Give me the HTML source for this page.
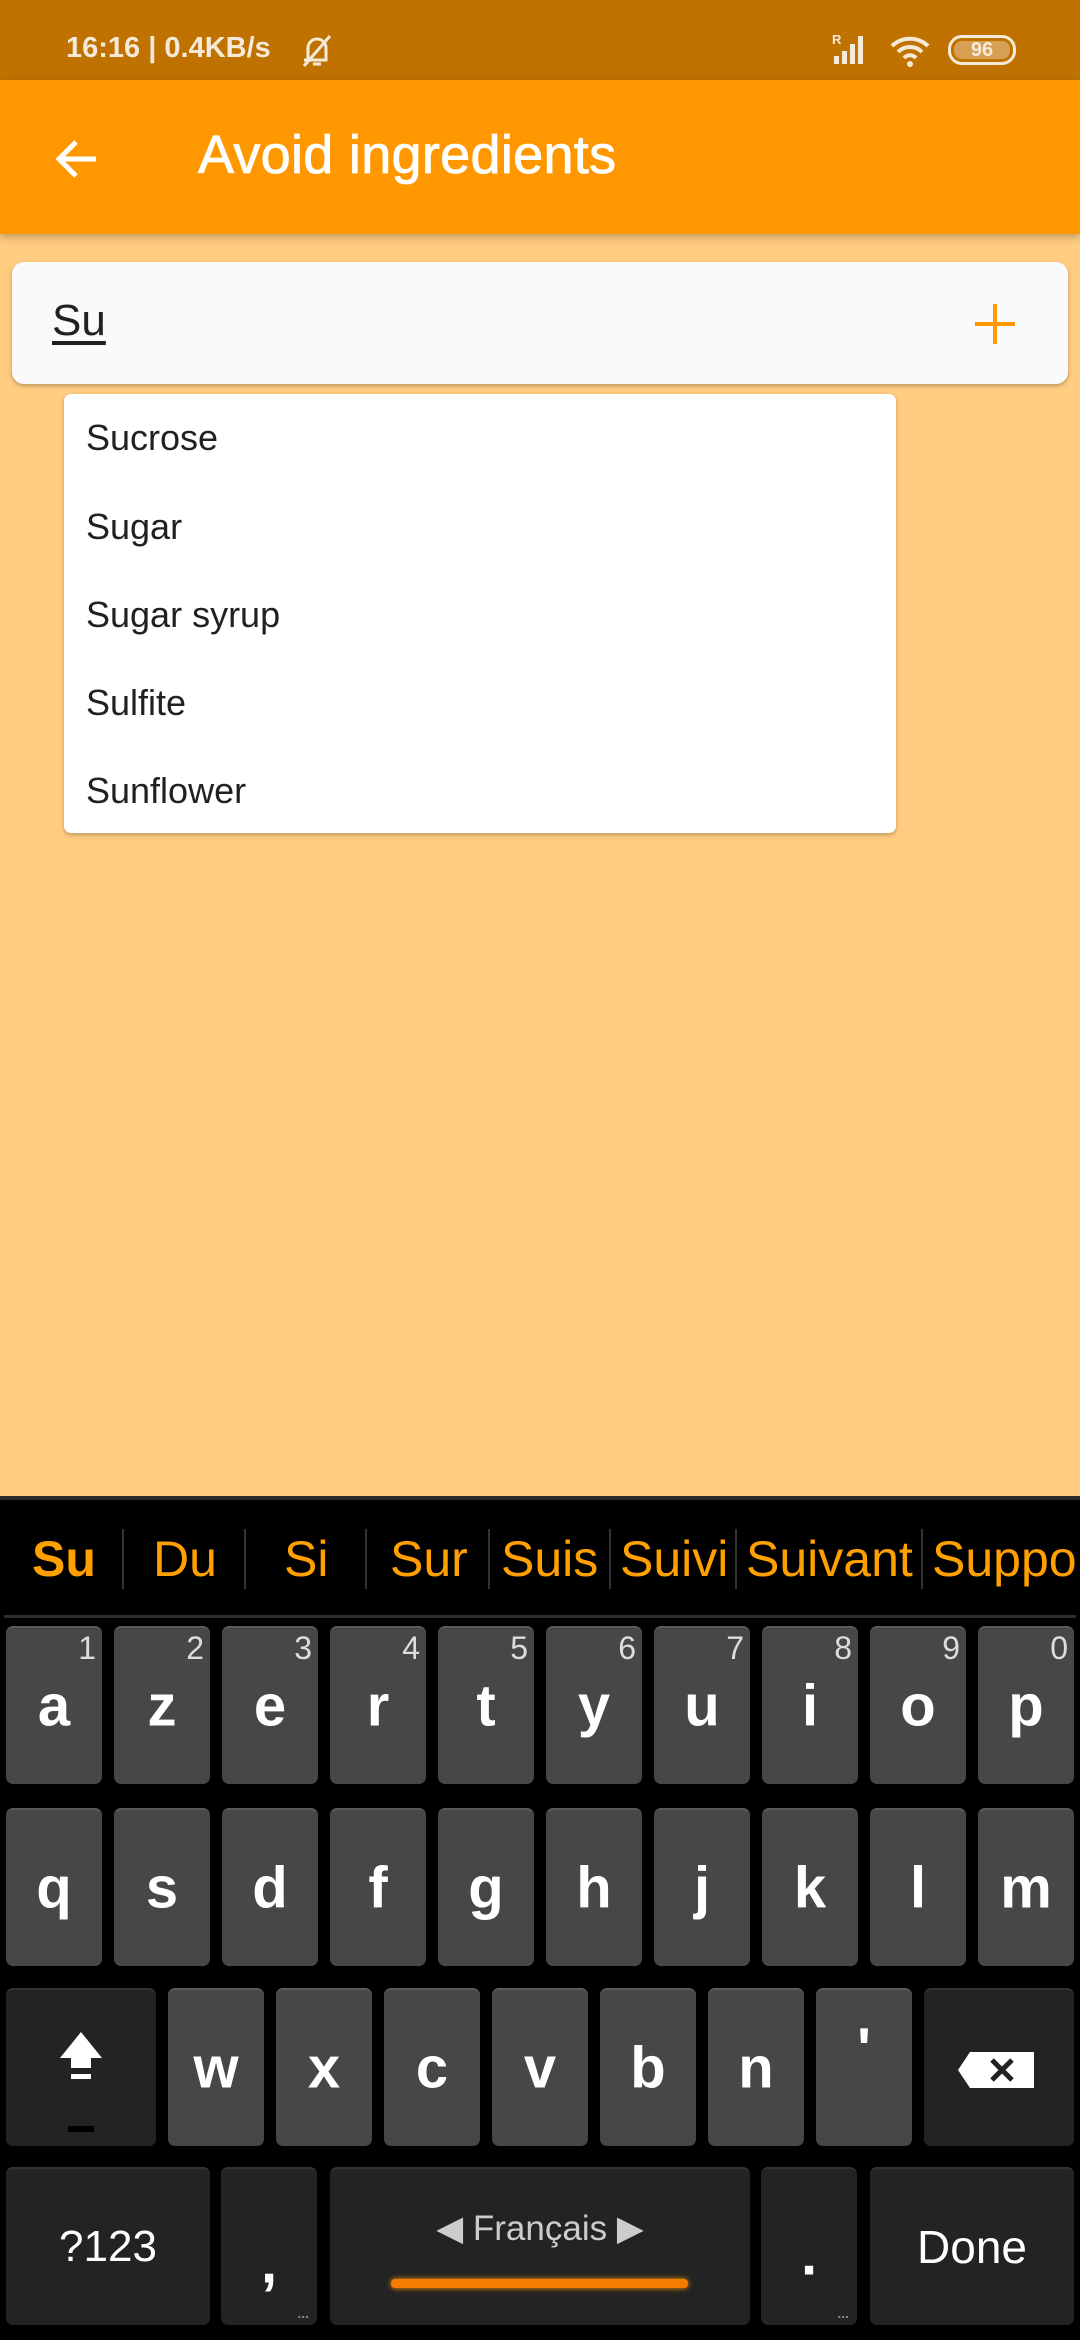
<!DOCTYPE html>
<html><head><meta charset="utf-8"><style>
*{margin:0;padding:0;box-sizing:border-box}
body{width:1080px;height:2340px;background:#ffcc80;font-family:"Liberation Sans",sans-serif;position:relative;overflow:hidden}
.abs{position:absolute}
.status{left:0;top:0;width:1080px;height:80px;background:#bf7200}
.appbar{left:0;top:80px;width:1080px;height:154px;background:#ff9800;box-shadow:0 3px 8px rgba(0,0,0,.25)}
.card{left:12px;top:262px;width:1056px;height:122px;background:#fafafa;border-radius:12px;box-shadow:0 2px 4px rgba(0,0,0,.25)}
.drop{left:64px;top:394px;width:832px;height:439px;background:#fff;border-radius:7px;box-shadow:0 2px 4px rgba(0,0,0,.25)}
.item{position:absolute;left:22px;font-size:36px;color:#212121;transform:translateY(-50%)}
.kb{left:0;top:1496px;width:1080px;height:844px;background:#000;border-top:4px solid #2a2a2a}
.sug{position:absolute;top:1559px;transform:translateY(-50%);font-size:50px;color:#ffa000;white-space:nowrap}
.sep{position:absolute;top:1529px;width:2px;height:60px;background:#333}
.key{position:absolute;width:96px;height:158px;background:#474747;border-radius:7px;border-top:2px solid #5a5a5a;color:#fff;font-weight:bold;font-size:58px;text-align:center}
.dk{background:#232323;border-top:2px solid #333}
.num{position:absolute;right:6px;top:2px;font-size:32px;font-weight:normal;color:#ddd}
.lt{position:absolute;left:0;right:0;top:50%;transform:translateY(-50%)}
</style></head><body>
<div class="abs status"></div>
<div class="abs" style="left:66px;top:32px;font-size:29px;font-weight:bold;color:#f5ead8">16:16 | 0.4KB/s</div>
<svg class="abs" style="left:298px;top:32px" width="38" height="38" viewBox="0 0 38 38"><path d="M10 28 V16 a9 9 0 0 1 18 0 V28 H6 M15 32 h8 M6 34 L32 4" stroke="#f5ead8" stroke-width="3" fill="none"/></svg>
<svg class="abs" style="left:832px;top:32px" width="46" height="34"><text x="0" y="12" font-size="13" fill="#f5ead8" font-family="Liberation Sans" font-weight="bold">R</text><rect x="2" y="24" width="5" height="8" fill="#f5ead8"/><rect x="10" y="19" width="5" height="13" fill="#f5ead8"/><rect x="18" y="12" width="5" height="20" fill="#f5ead8"/><rect x="26" y="4" width="5" height="28" fill="#f5ead8"/></svg>
<svg class="abs" style="left:888px;top:32px" width="48" height="38" viewBox="0 0 48 38"><path d="M4 14 a26 26 0 0 1 36 0 M10 20 a17 17 0 0 1 24 0 M16 26 a8 8 0 0 1 12 0" stroke="#f5ead8" stroke-width="4" fill="none"/><circle cx="22" cy="32" r="3" fill="#f5ead8"/></svg>
<div class="abs" style="left:948px;top:35px;width:68px;height:30px;border:3px solid #f5ead8;border-radius:14px"><div style="position:absolute;left:3px;top:3px;width:56px;height:18px;background:#d8a055;border-radius:8px;font-size:20px;font-weight:bold;color:#f5ead8;text-align:center;line-height:18px">96</div></div>
<div class="abs appbar"></div>
<svg class="abs" style="left:52px;top:134px" width="50" height="50" viewBox="0 0 50 50"><path d="M44 25 H8 M24 8 L7 25 L24 42" stroke="#fff" stroke-width="5" fill="none"/></svg>
<div class="abs" style="left:198px;top:124px;font-size:54px;color:#fff;letter-spacing:0.3px;-webkit-text-stroke:0.8px #fff">Avoid ingredients</div>
<div class="abs card"></div>
<div class="abs" style="left:52px;top:296px;font-size:44px;color:#212121;text-decoration:underline;text-underline-offset:6px">Su</div>
<svg class="abs" style="left:975px;top:304px" width="40" height="40"><path d="M20 0 V40 M0 20 H40" stroke="#ff9800" stroke-width="4"/></svg>
<div class="abs drop">
<div class="item" style="top:44px">Sucrose</div>
<div class="item" style="top:133px">Sugar</div>
<div class="item" style="top:221px">Sugar syrup</div>
<div class="item" style="top:309px">Sulfite</div>
<div class="item" style="top:397px">Sunflower</div>
</div>
<div class="abs kb"></div>
<div class="sug" style="left:32px;font-weight:bold">Su</div>
<div class="sep" style="left:122px"></div>
<div class="sug" style="left:153px">Du</div>
<div class="sep" style="left:244px"></div>
<div class="sug" style="left:284px">Si</div>
<div class="sep" style="left:365px"></div>
<div class="sug" style="left:390px">Sur</div>
<div class="sep" style="left:488px"></div>
<div class="sug" style="left:501px">Suis</div>
<div class="sep" style="left:609px"></div>
<div class="sug" style="left:620px">Suivi</div>
<div class="sep" style="left:735px"></div>
<div class="sug" style="left:746px">Suivant</div>
<div class="sep" style="left:921px"></div>
<div class="sug" style="left:932px">Suppor</div>
<div class="abs" style="left:4px;top:1615px;width:1072px;height:3px;background:#2e2e2e"></div>

<div class="key" style="left:6px;top:1626px"><span class="num">1</span><span class="lt">a</span></div>
<div class="key" style="left:114px;top:1626px"><span class="num">2</span><span class="lt">z</span></div>
<div class="key" style="left:222px;top:1626px"><span class="num">3</span><span class="lt">e</span></div>
<div class="key" style="left:330px;top:1626px"><span class="num">4</span><span class="lt">r</span></div>
<div class="key" style="left:438px;top:1626px"><span class="num">5</span><span class="lt">t</span></div>
<div class="key" style="left:546px;top:1626px"><span class="num">6</span><span class="lt">y</span></div>
<div class="key" style="left:654px;top:1626px"><span class="num">7</span><span class="lt">u</span></div>
<div class="key" style="left:762px;top:1626px"><span class="num">8</span><span class="lt">i</span></div>
<div class="key" style="left:870px;top:1626px"><span class="num">9</span><span class="lt">o</span></div>
<div class="key" style="left:978px;top:1626px"><span class="num">0</span><span class="lt">p</span></div>

<div class="key" style="left:6px;top:1808px"><span class="lt">q</span></div>
<div class="key" style="left:114px;top:1808px"><span class="lt">s</span></div>
<div class="key" style="left:222px;top:1808px"><span class="lt">d</span></div>
<div class="key" style="left:330px;top:1808px"><span class="lt">f</span></div>
<div class="key" style="left:438px;top:1808px"><span class="lt">g</span></div>
<div class="key" style="left:546px;top:1808px"><span class="lt">h</span></div>
<div class="key" style="left:654px;top:1808px"><span class="lt">j</span></div>
<div class="key" style="left:762px;top:1808px"><span class="lt">k</span></div>
<div class="key" style="left:870px;top:1808px"><span class="lt">l</span></div>
<div class="key" style="left:978px;top:1808px"><span class="lt">m</span></div>

<div class="key dk" style="left:6px;top:1988px;width:150px"><svg style="position:absolute;left:50px;top:38px" width="50" height="110"><path d="M25 4 L46 30 H35 V40 H15 V30 H4 Z" fill="#fff"/><rect x="15" y="46" width="20" height="5" fill="#fff"/><rect x="12" y="98" width="26" height="6" fill="#000"/></svg></div>
<div class="key" style="left:168px;top:1988px"><span class="lt">w</span></div>
<div class="key" style="left:276px;top:1988px"><span class="lt">x</span></div>
<div class="key" style="left:384px;top:1988px"><span class="lt">c</span></div>
<div class="key" style="left:492px;top:1988px"><span class="lt">v</span></div>
<div class="key" style="left:600px;top:1988px"><span class="lt">b</span></div>
<div class="key" style="left:708px;top:1988px"><span class="lt">n</span></div>
<div class="key" style="left:816px;top:1988px"><span class="lt" style="top:38%">'</span></div>
<div class="key dk" style="left:924px;top:1988px;width:150px"><svg style="position:absolute;left:32px;top:60px" width="80" height="40"><path d="M14 2 H78 V38 H14 L2 20 Z" fill="#fff"/><path d="M36 10 L56 30 M56 10 L36 30" stroke="#222" stroke-width="5"/></svg></div>

<div class="key dk" style="left:6px;top:2167px;width:204px;font-weight:normal;font-size:44px"><span class="lt">?123</span></div>
<div class="key dk" style="left:221px;top:2167px;font-size:58px"><span class="lt" style="top:60%">,</span><span style="position:absolute;right:8px;bottom:4px;font-size:14px;color:#888">...</span></div>
<div class="key dk" style="left:330px;top:2167px;width:420px;font-weight:normal"><span style="position:absolute;left:0;right:0;top:40px;font-size:35px;color:#ccc">&#9664;&#xFE0E; <span style="font-size:35px">Français</span> &#9654;&#xFE0E;</span><div style="position:absolute;left:61px;top:110px;width:297px;height:9px;background:#f57c00;border-radius:4px;box-shadow:0 0 6px #ff9800"></div></div>
<div class="key dk" style="left:761px;top:2167px"><span class="lt" style="top:55%">.</span><span style="position:absolute;right:8px;bottom:4px;font-size:14px;color:#888">...</span></div>
<div class="key dk" style="left:870px;top:2167px;width:204px;font-weight:normal;font-size:46px"><span class="lt">Done</span></div>
</body></html>
